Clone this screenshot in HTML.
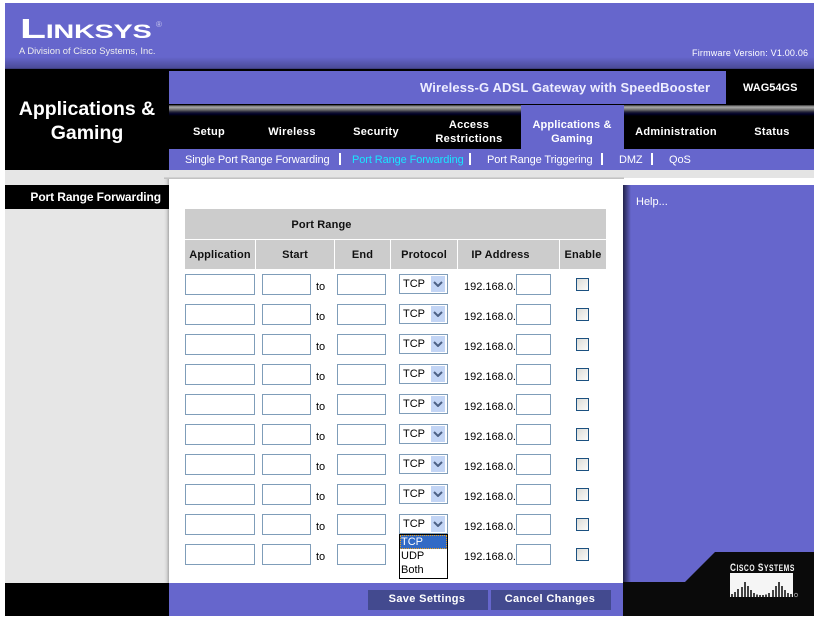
<!DOCTYPE html>
<html><head><meta charset="utf-8"><style>
html,body{margin:0;padding:0;background:#fff;}
body{width:818px;height:620px;position:relative;overflow:hidden;font-family:"Liberation Sans",Arial,sans-serif;}
.a{position:absolute;}
.t{position:absolute;white-space:nowrap;}
.nav{position:absolute;color:#fff;font-weight:bold;font-size:11px;letter-spacing:.3px;line-height:14px;text-align:center;transform:translateX(-50%);white-space:nowrap;}
.sub{position:absolute;color:#fff;font-size:11px;letter-spacing:-.1px;top:154px;line-height:13px;white-space:nowrap;}
.sep{position:absolute;background:#fff;width:2px;top:153px;height:12px;}
.th{position:absolute;background:#ccc;top:240px;height:29px;line-height:30px;text-align:center;font-weight:bold;font-size:11px;letter-spacing:.15px;color:#111;}
.r{position:absolute;left:0;width:818px;height:30px;font-size:11px;color:#000;}
.i{position:absolute;top:0;height:19px;border:1px solid #7f9db9;background:#fff;box-sizing:content-box;}
.s{position:absolute;left:399px;top:0;width:47px;height:18px;border:1px solid #7f9db9;background:#fff;}
.s span{position:absolute;left:3px;top:3px;line-height:13px;font-size:11px;}
.s i{position:absolute;left:31px;top:1px;width:14px;height:16px;background:#c3d5f5;}
.s svg{position:absolute;left:33px;top:6px;}
.to{position:absolute;left:316px;top:7px;line-height:13px;}
.ip{position:absolute;left:464px;top:7px;line-height:13px;}
.c{position:absolute;left:576px;top:4px;width:11px;height:11px;border:1px solid #1c5180;background:linear-gradient(135deg,#dcdcd7,#fbfbf9);}
</style></head><body>

<div class="a" style="left:5px;top:3px;width:809px;height:66px;background:linear-gradient(#6666cc 0,#6666cc 54px,#4b4b99 65px,#333366 66px);"></div>
<div class="a" style="left:5px;top:69px;width:809px;height:101px;background:#000;"></div>
<div class="a" style="left:169px;top:71px;width:557px;height:33px;background:#6666cc;"></div>
<div class="a" style="left:169px;top:105px;width:645px;height:11px;background:linear-gradient(#333 0,#aaa 2px,#999 3px,#666 5px,#222238 7px,#000028 9px,#000 11px);"></div>
<div class="a" style="left:169px;top:149px;width:645px;height:21px;background:#6666cc;"></div>
<div class="a" style="left:521px;top:105px;width:103px;height:44px;background:#6666cc;"></div>

<div class="a" style="left:5px;top:170px;width:809px;height:8px;background:#e4e4e4;"></div>
<div class="a" style="left:5px;top:170px;width:164px;height:413px;background:#e6e6e6;"></div>
<div class="a" style="left:164px;top:178px;width:5px;height:405px;background:linear-gradient(90deg,#e6e6e6,#d8d8d8 50%,#aaa);"></div>
<div class="a" style="left:164px;top:177px;width:460px;height:2px;background:linear-gradient(#d8d8d8,#bbb);"></div>
<div class="a" style="left:5px;top:185px;width:164px;height:24px;background:#000;"></div>

<div class="a" style="left:623px;top:185px;width:191px;height:398px;background:#6666cc;"></div>
<div class="a" style="left:623px;top:185px;width:8px;height:398px;background:linear-gradient(90deg,#22224a,#4a4a96 60%,#6666cc);"></div>
<div class="a" style="left:5px;top:583px;width:164px;height:33px;background:#000;"></div>
<div class="a" style="left:169px;top:583px;width:454px;height:33px;background:#6666cc;"></div>
<svg class="a" style="left:623px;top:552px;" width="191" height="64"><polygon points="92,0 191,0 191,64 0,64 0,30 62,30" fill="#0a0a0a"/></svg>
<div class="a" style="left:368px;top:590px;width:120px;height:20px;background:#434a8f;"></div>
<div class="a" style="left:491px;top:590px;width:120px;height:20px;background:#434a8f;"></div>
<div class="t" style="left:368px;top:590px;width:118px;text-align:center;line-height:18px;color:#fff;font-weight:bold;font-size:11px;letter-spacing:.35px;">Save Settings</div>
<div class="t" style="left:491px;top:590px;width:118px;text-align:center;line-height:18px;color:#fff;font-weight:bold;font-size:11px;letter-spacing:.35px;">Cancel Changes</div>

<div class="t" style="left:20px;top:14px;color:#fff;font-weight:bold;font-size:28px;line-height:30px;transform-origin:0 0;transform:scale(1.52,1);letter-spacing:-.2px;">L<span style="font-size:19px;">INKSYS</span></div>
<div class="t" style="left:156px;top:20px;color:#c8c8ee;font-size:8px;line-height:9px;">®</div>
<div class="t" style="left:19px;top:45px;color:#eee;font-size:9.4px;line-height:12px;">A Division of Cisco Systems, Inc.</div>
<div class="t" style="left:692px;top:47px;color:#fff;font-size:9px;line-height:13px;letter-spacing:.2px;">Firmware Version: V1.00.06</div>

<div class="t" style="left:5px;top:97px;width:164px;text-align:center;color:#fff;font-weight:bold;font-size:19.5px;line-height:24px;">Applications &amp;<br>Gaming</div>
<div class="t" style="left:5px;top:190px;width:156px;text-align:right;color:#fff;font-weight:bold;font-size:12px;letter-spacing:-.1px;line-height:14px;">Port Range Forwarding</div>
<div class="t" style="left:420px;top:79px;color:#eeeeff;font-weight:bold;font-size:13px;line-height:17px;letter-spacing:.14px;">Wireless-G ADSL Gateway with SpeedBooster</div>
<div class="t" style="left:743px;top:81px;color:#fff;font-weight:bold;font-size:11px;line-height:14px;">WAG54GS</div>

<div class="nav" style="left:209px;top:125px;">Setup</div>
<div class="nav" style="left:292px;top:125px;">Wireless</div>
<div class="nav" style="left:376px;top:125px;">Security</div>
<div class="nav" style="left:469px;top:118px;">Access<br>Restrictions</div>
<div class="nav" style="left:572px;top:118px;letter-spacing:.15px;">Applications &amp;<br>Gaming</div>
<div class="nav" style="left:676px;top:125px;">Administration</div>
<div class="nav" style="left:772px;top:125px;">Status</div>

<div class="sub" style="left:185px;">Single Port Range Forwarding</div><div class="sep" style="left:339px;"></div>
<div class="sub" style="left:352px;color:#19e6ff;">Port Range Forwarding</div><div class="sep" style="left:469px;"></div>
<div class="sub" style="left:487px;">Port Range Triggering</div><div class="sep" style="left:601px;"></div>
<div class="sub" style="left:619px;">DMZ</div><div class="sep" style="left:651px;"></div>
<div class="sub" style="left:669px;">QoS</div>
<div class="t" style="left:636px;top:196px;color:#fff;font-size:11px;line-height:13px;">Help...</div>

<div class="a" style="left:185px;top:209px;width:421px;height:30px;background:#ccc;"></div>
<div class="t" style="left:185px;top:210px;width:273px;text-align:center;line-height:30px;font-weight:bold;font-size:11px;letter-spacing:.15px;color:#111;">Port Range</div>
<div class="th" style="left:185px;width:70px;">Application</div>
<div class="th" style="left:256px;width:78px;">Start</div>
<div class="th" style="left:335px;width:55px;">End</div>
<div class="th" style="left:391px;width:66px;">Protocol</div>
<div class="th" style="left:458px;width:101px;"><span style="position:relative;left:-8px;">IP Address</span></div>
<div class="th" style="left:560px;width:46px;">Enable</div>

<div class="r" style="top:274px;"><div class="i" style="left:185px;width:68px;"></div><div class="i" style="left:262px;width:47px;"></div><span class="to">to</span><div class="i" style="left:337px;width:47px;"></div><div class="s"><span>TCP</span><i></i><svg width="10" height="6"><path d="M1 1L5 5L9 1" fill="none" stroke="#4d6185" stroke-width="2"/></svg></div><span class="ip">192.168.0.</span><div class="i" style="left:516px;width:33px;"></div><div class="c"></div></div>
<div class="r" style="top:304px;"><div class="i" style="left:185px;width:68px;"></div><div class="i" style="left:262px;width:47px;"></div><span class="to">to</span><div class="i" style="left:337px;width:47px;"></div><div class="s"><span>TCP</span><i></i><svg width="10" height="6"><path d="M1 1L5 5L9 1" fill="none" stroke="#4d6185" stroke-width="2"/></svg></div><span class="ip">192.168.0.</span><div class="i" style="left:516px;width:33px;"></div><div class="c"></div></div>
<div class="r" style="top:334px;"><div class="i" style="left:185px;width:68px;"></div><div class="i" style="left:262px;width:47px;"></div><span class="to">to</span><div class="i" style="left:337px;width:47px;"></div><div class="s"><span>TCP</span><i></i><svg width="10" height="6"><path d="M1 1L5 5L9 1" fill="none" stroke="#4d6185" stroke-width="2"/></svg></div><span class="ip">192.168.0.</span><div class="i" style="left:516px;width:33px;"></div><div class="c"></div></div>
<div class="r" style="top:364px;"><div class="i" style="left:185px;width:68px;"></div><div class="i" style="left:262px;width:47px;"></div><span class="to">to</span><div class="i" style="left:337px;width:47px;"></div><div class="s"><span>TCP</span><i></i><svg width="10" height="6"><path d="M1 1L5 5L9 1" fill="none" stroke="#4d6185" stroke-width="2"/></svg></div><span class="ip">192.168.0.</span><div class="i" style="left:516px;width:33px;"></div><div class="c"></div></div>
<div class="r" style="top:394px;"><div class="i" style="left:185px;width:68px;"></div><div class="i" style="left:262px;width:47px;"></div><span class="to">to</span><div class="i" style="left:337px;width:47px;"></div><div class="s"><span>TCP</span><i></i><svg width="10" height="6"><path d="M1 1L5 5L9 1" fill="none" stroke="#4d6185" stroke-width="2"/></svg></div><span class="ip">192.168.0.</span><div class="i" style="left:516px;width:33px;"></div><div class="c"></div></div>
<div class="r" style="top:424px;"><div class="i" style="left:185px;width:68px;"></div><div class="i" style="left:262px;width:47px;"></div><span class="to">to</span><div class="i" style="left:337px;width:47px;"></div><div class="s"><span>TCP</span><i></i><svg width="10" height="6"><path d="M1 1L5 5L9 1" fill="none" stroke="#4d6185" stroke-width="2"/></svg></div><span class="ip">192.168.0.</span><div class="i" style="left:516px;width:33px;"></div><div class="c"></div></div>
<div class="r" style="top:454px;"><div class="i" style="left:185px;width:68px;"></div><div class="i" style="left:262px;width:47px;"></div><span class="to">to</span><div class="i" style="left:337px;width:47px;"></div><div class="s"><span>TCP</span><i></i><svg width="10" height="6"><path d="M1 1L5 5L9 1" fill="none" stroke="#4d6185" stroke-width="2"/></svg></div><span class="ip">192.168.0.</span><div class="i" style="left:516px;width:33px;"></div><div class="c"></div></div>
<div class="r" style="top:484px;"><div class="i" style="left:185px;width:68px;"></div><div class="i" style="left:262px;width:47px;"></div><span class="to">to</span><div class="i" style="left:337px;width:47px;"></div><div class="s"><span>TCP</span><i></i><svg width="10" height="6"><path d="M1 1L5 5L9 1" fill="none" stroke="#4d6185" stroke-width="2"/></svg></div><span class="ip">192.168.0.</span><div class="i" style="left:516px;width:33px;"></div><div class="c"></div></div>
<div class="r" style="top:514px;"><div class="i" style="left:185px;width:68px;"></div><div class="i" style="left:262px;width:47px;"></div><span class="to">to</span><div class="i" style="left:337px;width:47px;"></div><div class="s"><span>TCP</span><i></i><svg width="10" height="6"><path d="M1 1L5 5L9 1" fill="none" stroke="#4d6185" stroke-width="2"/></svg></div><span class="ip">192.168.0.</span><div class="i" style="left:516px;width:33px;"></div><div class="c"></div></div>
<div class="r" style="top:544px;"><div class="i" style="left:185px;width:68px;"></div><div class="i" style="left:262px;width:47px;"></div><span class="to">to</span><div class="i" style="left:337px;width:47px;"></div><span class="ip">192.168.0.</span><div class="i" style="left:516px;width:33px;"></div><div class="c"></div></div>

<div class="a" style="left:399px;top:534px;width:47px;height:43px;border:1px solid #000;background:#fff;font-size:11px;line-height:14px;">
<div style="height:14px;line-height:15px;margin:0;padding-left:1px;background:#316ac5;color:#fff;outline:1px dotted #e8a020;outline-offset:-1px;">TCP</div>
<div style="padding-left:1px;">UDP</div>
<div style="padding-left:1px;">Both</div>
</div>

<div class="t" style="left:730px;top:562px;color:#f4f4f4;font-weight:bold;font-size:11px;line-height:12px;transform-origin:0 0;transform:scale(.75,1);letter-spacing:.7px;">C<span style="font-size:9px;">ISCO</span> S<span style="font-size:9px;">YSTEMS</span></div>
<svg class="a" style="left:730px;top:573px;" width="70" height="25">
<rect x="0" y="0" width="63" height="24" fill="#f5f5f5"/>
<path d="M2 24V21M5 24V19M8 24V16M12 24V14M15 24V9M18 24V13M21 24V17M24 24V20M27 24V21.500M30 24V22M33 24V22M36 24V21.500M39 24V20M43 24V17M46 24V13M49 24V9M52 24V13M55 24V17M58 24V20M61 24V21" stroke="#222" stroke-width="1.700" fill="none"/>
<circle cx="66" cy="22" r="1.700" fill="none" stroke="#999" stroke-width=".8"/>
</svg>
</body></html>
